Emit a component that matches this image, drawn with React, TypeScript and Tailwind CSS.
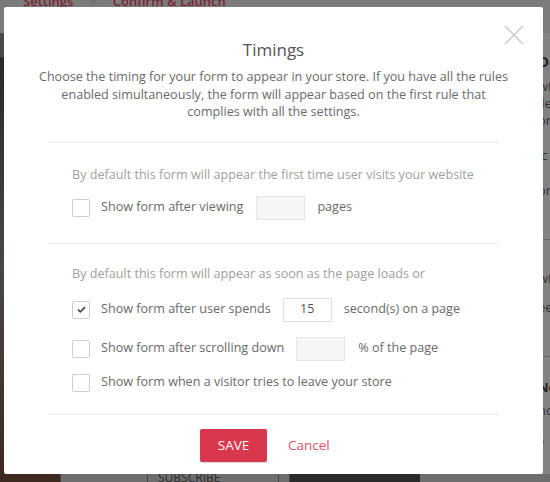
import React from "react";

function Checkbox({ checked = false }: { checked?: boolean }) {
  return (
    <div className="w-[18px] h-[18px] shrink-0 border border-[#cfcfcf] rounded-[2px] bg-white flex items-center justify-center">
      {checked && (
        <svg width="9" height="7" viewBox="0 0 9 7">
          <path d="M1 3.6 L3.4 5.8 L8 1.2" fill="none" stroke="#444" strokeWidth="1.7" />
        </svg>
      )}
    </div>
  );
}

function NumInput({ value = "", filled = false }: { value?: string; filled?: boolean }) {
  return (
    <div
      className={
        "w-[49px] h-[24px] shrink-0 border flex items-center justify-center text-[12.6px] text-[#555] " +
        (filled ? "bg-white border-[#dedede]" : "bg-[#f6f6f6] border-[#e6e6e6]")
      }
    >
      {value}
    </div>
  );
}

export default function App() {
  return (
    <div
      className="relative w-[550px] h-[482px] overflow-hidden bg-[#7b7b7b]"
      style={{ fontFamily: '"Open Sans", "Noto Sans", sans-serif' }}
    >
      {/* dimmed page behind */}
      <div className="flex flex-col h-full">
        <div className="h-[33px] flex items-start pl-[23px] text-[13px] font-semibold text-[#7a2530] leading-[18px] -mt-[8px]">
          <span>Settings</span>
          <span className="ml-[16px] text-[#6a6a6a]">&gt;</span>
          <span className="ml-[16px]">Confirm &amp; Launch</span>
        </div>
        <div className="flex flex-1 mt-[8px]">
          <div className="w-[50px] flex flex-col">
            <div className="h-[24px] bg-[#4a4a4a]" />
            <div className="flex-1 bg-gradient-to-b from-[#2a2a2a] via-[#4a4646] to-[#3e2a1e]" />
          </div>
          <div className="flex-1" />
          <div className="w-[12px] ml-[-5px] bg-[#828282] flex flex-col text-[13px] text-[#333] leading-[17px] pt-[20px] overflow-hidden whitespace-nowrap">
            <span className="font-bold text-[15px] text-[#222]">Do</span>
            <span className="mt-[8px]">wi</span>
            <span>lle</span>
            <span>on</span>
            <span className="mt-[18px]">lc</span>
            <span className="mt-[18px]">on</span>
            <div className="mt-[40px] h-px bg-[#666]" />
            <span className="mt-[30px]">wi</span>
            <span className="mt-[12px]">ee</span>
            <div className="mt-[40px] h-px bg-[#666]" />
            <span className="mt-[22px] font-bold text-[#222]">No</span>
            <span className="mt-[6px]">nc</span>
            <span className="mt-[12px]">s</span>
          </div>
        </div>
        <div className="h-[8px] flex">
          <div className="w-[60px] bg-[#3e2a1e]" />
          <div className="w-[88px] border-x border-[#444] bg-[#6e6e6e]" />
          <div className="w-[130px] bg-[#6e6e6e] text-[12px] leading-[12px] text-[#2a2a2a] pl-[10px] -mt-[2px] overflow-hidden">SUBSCRIBE</div>
          <div className="w-[12px] border-x border-[#444] bg-[#6e6e6e]" />
          <div className="w-[130px] bg-[#2a2a2a]" />
          <div className="flex-1 bg-[#6e6e6e]" />
        </div>
      </div>

      {/* modal */}
      <div className="absolute left-[4px] top-[7px] w-[539px] h-[467px] bg-white rounded-[2px] flex flex-col">
        <button className="absolute right-[19px] top-[18px] w-[20px] h-[20px]">
          <svg width="20" height="20" viewBox="0 0 20 20">
            <path d="M1 1 L19 19 M19 1 L1 19" stroke="#c9c9c9" strokeWidth="1.4" />
          </svg>
        </button>

        <h2 className="mt-[31px] text-center text-[17px] leading-[24px] text-[#555] font-normal">Timings</h2>
        <p className="mt-[6px] px-[30px] text-center text-[12.6px] leading-[17.5px] text-[#6a6a6a]">
          Choose the timing for your form to appear in your store. If you have all the rules enabled simultaneously, the form will appear based on the first rule that complies with all the settings.
        </p>

        <div className="mx-[44px] mt-[21px] h-px bg-[#ececec]" />

        <div className="mx-[44px] pl-[24px]">
          <div className="mt-[23px] text-[12.6px] leading-[18px] text-[#a0a0a0]">
            By default this form will appear the first time user visits your website
          </div>
          <div className="mt-[12px] flex items-center h-[24px] text-[12.6px] text-[#6a6a6a]">
            <Checkbox />
            <span className="ml-[11px]">Show form after viewing</span>
            <div className="ml-[13px]">
              <NumInput />
            </div>
            <span className="ml-[12px]">pages</span>
          </div>
        </div>

        <div className="mx-[44px] mt-[23px] h-px bg-[#ececec]" />

        <div className="mx-[44px] pl-[24px]">
          <div className="mt-[21px] text-[12.6px] leading-[18px] text-[#a0a0a0]">
            By default this form will appear as soon as the page loads or
          </div>
          <div className="mt-[15px] flex items-center h-[24px] text-[12.6px] text-[#6a6a6a]">
            <Checkbox checked />
            <span className="ml-[11px]">Show form after user spends</span>
            <div className="ml-[12px]">
              <NumInput value="15" filled />
            </div>
            <span className="ml-[12px]">second(s) on a page</span>
          </div>
          <div className="mt-[15px] flex items-center h-[24px] text-[12.6px] text-[#6a6a6a]">
            <Checkbox />
            <span className="ml-[11px]">Show form after scrolling down</span>
            <div className="ml-[12px]">
              <NumInput />
            </div>
            <span className="ml-[13px]">% of the page</span>
          </div>
          <div className="mt-[10px] flex items-center h-[24px] text-[12.6px] text-[#6a6a6a]">
            <Checkbox />
            <span className="ml-[11px]">Show form when a visitor tries to leave your store</span>
          </div>
        </div>

        <div className="mx-[44px] mt-[19px] h-px bg-[#ececec]" />

        <div className="mt-[14px] flex items-center pl-[196px]">
          <button className="w-[67px] h-[33px] bg-[#d9374d] rounded-[2px] text-white text-[13.5px] uppercase shadow-[0_1px_1px_rgba(0,0,0,0.15)]">
            SAVE
          </button>
          <button className="ml-[21px] text-[13.5px] text-[#e05068]">Cancel</button>
        </div>
      </div>
    </div>
  );
}
